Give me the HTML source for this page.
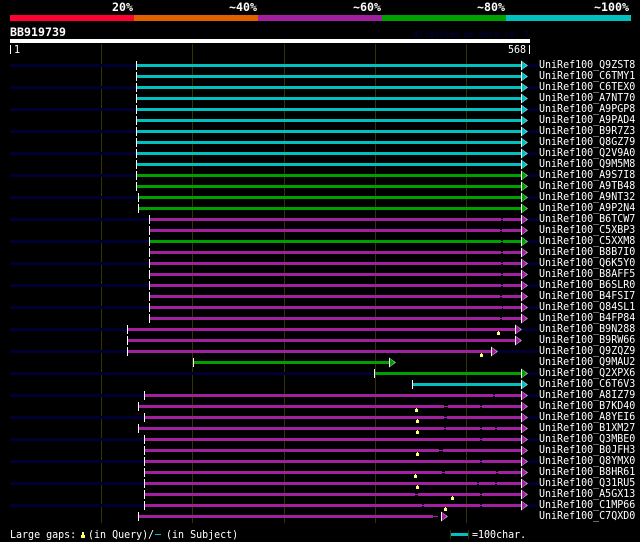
<!DOCTYPE html>
<html><head><meta charset="utf-8"><title>BB919739</title>
<style>
html,body{margin:0;padding:0;background:#000;width:640px;height:542px;overflow:hidden}
svg{display:block}
text{font-family:"DejaVu Sans Mono","Liberation Mono",monospace;font-size:11px;fill:#fff}
.b{font-weight:bold;font-size:11.6px}
</style></head><body>
<svg width="640" height="542" viewBox="0 0 640 542" xmlns="http://www.w3.org/2000/svg" shape-rendering="crispEdges">
<defs>
<g id="t"><rect x="0" y="-3" width="1" height="9" fill="#fff"/></g>
<g id="a"><path fill="#fff" shape-rendering="auto" d="M0-3.5 6.8 1.5 0 6.5z"/><path shape-rendering="auto" d="M1-2.6 5.9 1.5 1 5.6z"/></g>
<rect id="n" x="10" y="0" width="528" height="3" fill="#000033"/>
<g id="m" fill="#ffff70"><rect x="-1" y="1" width="3" height="3"/><rect x="0" y="0" width="1" height="1"/></g>
</defs>
<rect width="640" height="542" fill="#000"/>
<rect x="10" y="15" width="124" height="6" fill="#ff0033"/>
<rect x="134" y="15" width="124" height="6" fill="#e06000"/>
<rect x="258" y="15" width="124" height="6" fill="#a020a0"/>
<rect x="382" y="15" width="124" height="6" fill="#00a000"/>
<rect x="506" y="15" width="125" height="6" fill="#00c0c0"/>
<text class="b" x="112" y="11" textLength="21">20%</text>
<text class="b" x="229" y="11" textLength="28">~40%</text>
<text class="b" x="353" y="11" textLength="28">~60%</text>
<text class="b" x="477" y="11" textLength="28">~80%</text>
<text class="b" x="594" y="11" textLength="35">~100%</text>
<text class="b" x="10" y="36" textLength="56">BB919739</text>
<text x="414" y="37" textLength="115" style="font-size:8.3px;font-weight:bold;fill:#000033">AlignView.pm Beta rel.7</text>
<rect x="10" y="39" width="520" height="4" fill="#fff"/>
<rect x="10" y="45" width="1" height="9" fill="#fff"/>
<text transform="translate(14,53) scale(.91,1)">1</text>
<text transform="translate(508,53) scale(.91,1)">568</text>
<rect x="529" y="45" width="1" height="9" fill="#fff"/>
<g fill="#333300">
<rect x="101" y="44" width="1" height="479"/>
<rect x="192" y="44" width="1" height="479"/>
<rect x="284" y="44" width="1" height="479"/>
<rect x="375" y="44" width="1" height="479"/>
<rect x="466" y="44" width="1" height="479"/>
</g>

<g transform="translate(0,64)" fill="#00c0c0"><use href="#n"/><rect x="137" width="384" height="3"/><use href="#t" x="136"/><use href="#a" x="521"/></g>
<g transform="translate(0,75)" fill="#00c0c0"><rect x="137" width="384" height="3"/><use href="#t" x="136"/><use href="#a" x="521"/></g>
<g transform="translate(0,86)" fill="#00c0c0"><use href="#n"/><rect x="137" width="384" height="3"/><use href="#t" x="136"/><use href="#a" x="521"/></g>
<g transform="translate(0,97)" fill="#00c0c0"><rect x="137" width="384" height="3"/><use href="#t" x="136"/><use href="#a" x="521"/></g>
<g transform="translate(0,108)" fill="#00c0c0"><use href="#n"/><rect x="137" width="384" height="3"/><use href="#t" x="136"/><use href="#a" x="521"/></g>
<g transform="translate(0,119)" fill="#00c0c0"><rect x="137" width="384" height="3"/><use href="#t" x="136"/><use href="#a" x="521"/></g>
<g transform="translate(0,130)" fill="#00c0c0"><use href="#n"/><rect x="137" width="384" height="3"/><use href="#t" x="136"/><use href="#a" x="521"/></g>
<g transform="translate(0,141)" fill="#00c0c0"><rect x="137" width="384" height="3"/><use href="#t" x="136"/><use href="#a" x="521"/></g>
<g transform="translate(0,152)" fill="#00c0c0"><use href="#n"/><rect x="137" width="384" height="3"/><use href="#t" x="136"/><use href="#a" x="521"/></g>
<g transform="translate(0,163)" fill="#00c0c0"><rect x="137" width="384" height="3"/><use href="#t" x="136"/><use href="#a" x="521"/></g>
<g transform="translate(0,174)" fill="#00a000"><use href="#n"/><rect x="137" width="384" height="3"/><use href="#t" x="136"/><use href="#a" x="521"/></g>
<g transform="translate(0,185)" fill="#00a000"><rect x="137" width="384" height="3"/><use href="#t" x="136"/><use href="#a" x="521"/></g>
<g transform="translate(0,196)" fill="#00a000"><use href="#n"/><rect x="139" width="382" height="3"/><use href="#t" x="138"/><use href="#a" x="521"/></g>
<g transform="translate(0,207)" fill="#00a000"><rect x="139" width="382" height="3"/><use href="#t" x="138"/><use href="#a" x="521"/></g>
<g transform="translate(0,218)" fill="#a020a0"><use href="#n"/><path d="M150 0H501V3H150zM501 1H503V2H501zM503 0H521V3H503z"/><use href="#t" x="149"/><use href="#a" x="521"/></g>
<g transform="translate(0,229)" fill="#a020a0"><path d="M150 0H500V3H150zM500 1H502V2H500zM502 0H521V3H502z"/><use href="#t" x="149"/><use href="#a" x="521"/></g>
<g transform="translate(0,240)" fill="#00a000"><use href="#n"/><path d="M150 0H501V3H150zM501 1H503V2H501zM503 0H521V3H503z"/><use href="#t" x="149"/><use href="#a" x="521"/></g>
<g transform="translate(0,251)" fill="#a020a0"><path d="M150 0H501V3H150zM501 1H503V2H501zM503 0H521V3H503z"/><use href="#t" x="149"/><use href="#a" x="521"/></g>
<g transform="translate(0,262)" fill="#a020a0"><use href="#n"/><path d="M150 0H501V3H150zM501 1H503V2H501zM503 0H521V3H503z"/><use href="#t" x="149"/><use href="#a" x="521"/></g>
<g transform="translate(0,273)" fill="#a020a0"><path d="M150 0H501V3H150zM501 1H503V2H501zM503 0H521V3H503z"/><use href="#t" x="149"/><use href="#a" x="521"/></g>
<g transform="translate(0,284)" fill="#a020a0"><use href="#n"/><path d="M150 0H501V3H150zM501 1H503V2H501zM503 0H521V3H503z"/><use href="#t" x="149"/><use href="#a" x="521"/></g>
<g transform="translate(0,295)" fill="#a020a0"><path d="M150 0H500V3H150zM500 1H502V2H500zM502 0H521V3H502z"/><use href="#t" x="149"/><use href="#a" x="521"/></g>
<g transform="translate(0,306)" fill="#a020a0"><use href="#n"/><path d="M150 0H502V3H150zM502 1H503V2H502zM503 0H521V3H503z"/><use href="#t" x="149"/><use href="#a" x="521"/></g>
<g transform="translate(0,317)" fill="#a020a0"><path d="M150 0H500V3H150zM500 1H502V2H500zM502 0H521V3H502z"/><use href="#t" x="149"/><use href="#a" x="521"/></g>
<g transform="translate(0,328)" fill="#a020a0"><use href="#n"/><rect x="128" width="387" height="3"/><use href="#t" x="127"/><use href="#a" x="515"/><use href="#m" x="498" y="3"/></g>
<g transform="translate(0,339)" fill="#a020a0"><rect x="128" width="387" height="3"/><use href="#t" x="127"/><use href="#a" x="515"/></g>
<g transform="translate(0,350)" fill="#a020a0"><use href="#n"/><rect x="128" width="363" height="3"/><use href="#t" x="127"/><use href="#a" x="491"/><use href="#m" x="481" y="3"/></g>
<g transform="translate(0,361)" fill="#00a000"><rect x="194" width="195" height="3"/><use href="#t" x="193"/><use href="#a" x="389"/></g>
<g transform="translate(0,372)" fill="#00a000"><use href="#n"/><rect x="375" width="146" height="3"/><use href="#t" x="374"/><use href="#a" x="521"/></g>
<g transform="translate(0,383)" fill="#00c0c0"><rect x="413" width="108" height="3"/><use href="#t" x="412"/><use href="#a" x="521"/></g>
<g transform="translate(0,394)" fill="#a020a0"><use href="#n"/><path d="M145 0H493V3H145zM493 1H495V2H493zM495 0H521V3H495z"/><use href="#t" x="144"/><use href="#a" x="521"/></g>
<g transform="translate(0,405)" fill="#a020a0"><path d="M139 0H444V3H139zM444 1H448V2H444zM448 0H480V3H448zM480 1H482V2H480zM482 0H521V3H482z"/><use href="#t" x="138"/><use href="#a" x="521"/><use href="#m" x="416" y="3"/></g>
<g transform="translate(0,416)" fill="#a020a0"><use href="#n"/><path d="M145 0H444V3H145zM444 1H447V2H444zM447 0H521V3H447z"/><use href="#t" x="144"/><use href="#a" x="521"/><use href="#m" x="417" y="3"/></g>
<g transform="translate(0,427)" fill="#a020a0"><path d="M139 0H444V3H139zM444 1H446V2H444zM446 0H480V3H446zM480 1H482V2H480zM482 0H495V3H482zM495 1H497V2H495zM497 0H521V3H497z"/><use href="#t" x="138"/><use href="#a" x="521"/><use href="#m" x="417" y="3"/></g>
<g transform="translate(0,438)" fill="#a020a0"><use href="#n"/><path d="M145 0H480V3H145zM480 1H482V2H480zM482 0H521V3H482z"/><use href="#t" x="144"/><use href="#a" x="521"/></g>
<g transform="translate(0,449)" fill="#a020a0"><path d="M145 0H439V3H145zM439 1H443V2H439zM443 0H521V3H443z"/><use href="#t" x="144"/><use href="#a" x="521"/><use href="#m" x="417" y="3"/></g>
<g transform="translate(0,460)" fill="#a020a0"><use href="#n"/><path d="M145 0H480V3H145zM480 1H482V2H480zM482 0H521V3H482z"/><use href="#t" x="144"/><use href="#a" x="521"/></g>
<g transform="translate(0,471)" fill="#a020a0"><path d="M145 0H442V3H145zM442 1H445V2H442zM445 0H496V3H445zM496 1H498V2H496zM498 0H521V3H498z"/><use href="#t" x="144"/><use href="#a" x="521"/><use href="#m" x="415" y="3"/></g>
<g transform="translate(0,482)" fill="#a020a0"><use href="#n"/><path d="M145 0H477V3H145zM477 1H479V2H477zM479 0H495V3H479zM495 1H497V2H495zM497 0H521V3H497z"/><use href="#t" x="144"/><use href="#a" x="521"/><use href="#m" x="417" y="3"/></g>
<g transform="translate(0,493)" fill="#a020a0"><path d="M145 0H415V3H145zM415 1H418V2H415zM418 0H480V3H418zM480 1H482V2H480zM482 0H521V3H482z"/><use href="#t" x="144"/><use href="#a" x="521"/><use href="#m" x="452" y="3"/></g>
<g transform="translate(0,504)" fill="#a020a0"><use href="#n"/><path d="M145 0H422V3H145zM422 1H424V2H422zM424 0H480V3H424zM480 1H482V2H480zM482 0H521V3H482z"/><use href="#t" x="144"/><use href="#a" x="521"/><use href="#m" x="445" y="3"/></g>
<g transform="translate(0,515)" fill="#a020a0"><path d="M139 0H433V3H139zM433 1H438V2H433z"/><use href="#t" x="138"/><use href="#a" x="441"/></g>

<g transform="translate(539,0) scale(.91,1)">
<text x="0" y="68">UniRef100_Q9ZST8</text>
<text x="0" y="79">UniRef100_C6TMY1</text>
<text x="0" y="90">UniRef100_C6TEX0</text>
<text x="0" y="101">UniRef100_A7NT70</text>
<text x="0" y="112">UniRef100_A9PGP8</text>
<text x="0" y="123">UniRef100_A9PAD4</text>
<text x="0" y="134">UniRef100_B9R7Z3</text>
<text x="0" y="145">UniRef100_Q8GZ79</text>
<text x="0" y="156">UniRef100_Q2V9A0</text>
<text x="0" y="167">UniRef100_Q9M5M8</text>
<text x="0" y="178">UniRef100_A9S7I8</text>
<text x="0" y="189">UniRef100_A9TB48</text>
<text x="0" y="200">UniRef100_A9NT32</text>
<text x="0" y="211">UniRef100_A9P2N4</text>
<text x="0" y="222">UniRef100_B6TCW7</text>
<text x="0" y="233">UniRef100_C5XBP3</text>
<text x="0" y="244">UniRef100_C5XXM8</text>
<text x="0" y="255">UniRef100_B8B7I0</text>
<text x="0" y="266">UniRef100_Q6K5Y0</text>
<text x="0" y="277">UniRef100_B8AFF5</text>
<text x="0" y="288">UniRef100_B6SLR0</text>
<text x="0" y="299">UniRef100_B4FSI7</text>
<text x="0" y="310">UniRef100_Q84SL1</text>
<text x="0" y="321">UniRef100_B4FP84</text>
<text x="0" y="332">UniRef100_B9N288</text>
<text x="0" y="343">UniRef100_B9RW66</text>
<text x="0" y="354">UniRef100_Q9ZQZ9</text>
<text x="0" y="365">UniRef100_Q9MAU2</text>
<text x="0" y="376">UniRef100_Q2XPX6</text>
<text x="0" y="387">UniRef100_C6T6V3</text>
<text x="0" y="398">UniRef100_A8IZ79</text>
<text x="0" y="409">UniRef100_B7KD40</text>
<text x="0" y="420">UniRef100_A8YEI6</text>
<text x="0" y="431">UniRef100_B1XM27</text>
<text x="0" y="442">UniRef100_Q3MBE0</text>
<text x="0" y="453">UniRef100_B0JFH3</text>
<text x="0" y="464">UniRef100_Q8YMX0</text>
<text x="0" y="475">UniRef100_B8HR61</text>
<text x="0" y="486">UniRef100_Q31RU5</text>
<text x="0" y="497">UniRef100_A5GX13</text>
<text x="0" y="508">UniRef100_C1MP66</text>
<text x="0" y="519">UniRef100_C7QXD0</text>
</g>

<text transform="translate(10,538) scale(.91,1)">Large gaps:</text>
<g fill="#ffff70"><rect x="81" y="535" width="4" height="3"/><rect x="82" y="532" width="2" height="3"/></g>
<text transform="translate(88,538) scale(.91,1)">(in Query)/</text>
<rect x="155" y="534" width="6" height="1" fill="#00c0c0"/>
<text transform="translate(166,538) scale(.91,1)">(in Subject)</text>
<rect x="450" y="530" width="1" height="9" fill="#333300"/>
<rect x="468" y="530" width="1" height="9" fill="#333300"/>
<rect x="451" y="533" width="17" height="3" fill="#00c0c0"/>
<text transform="translate(472,538) scale(.91,1)">=100char.</text>
</svg>
</body></html>
